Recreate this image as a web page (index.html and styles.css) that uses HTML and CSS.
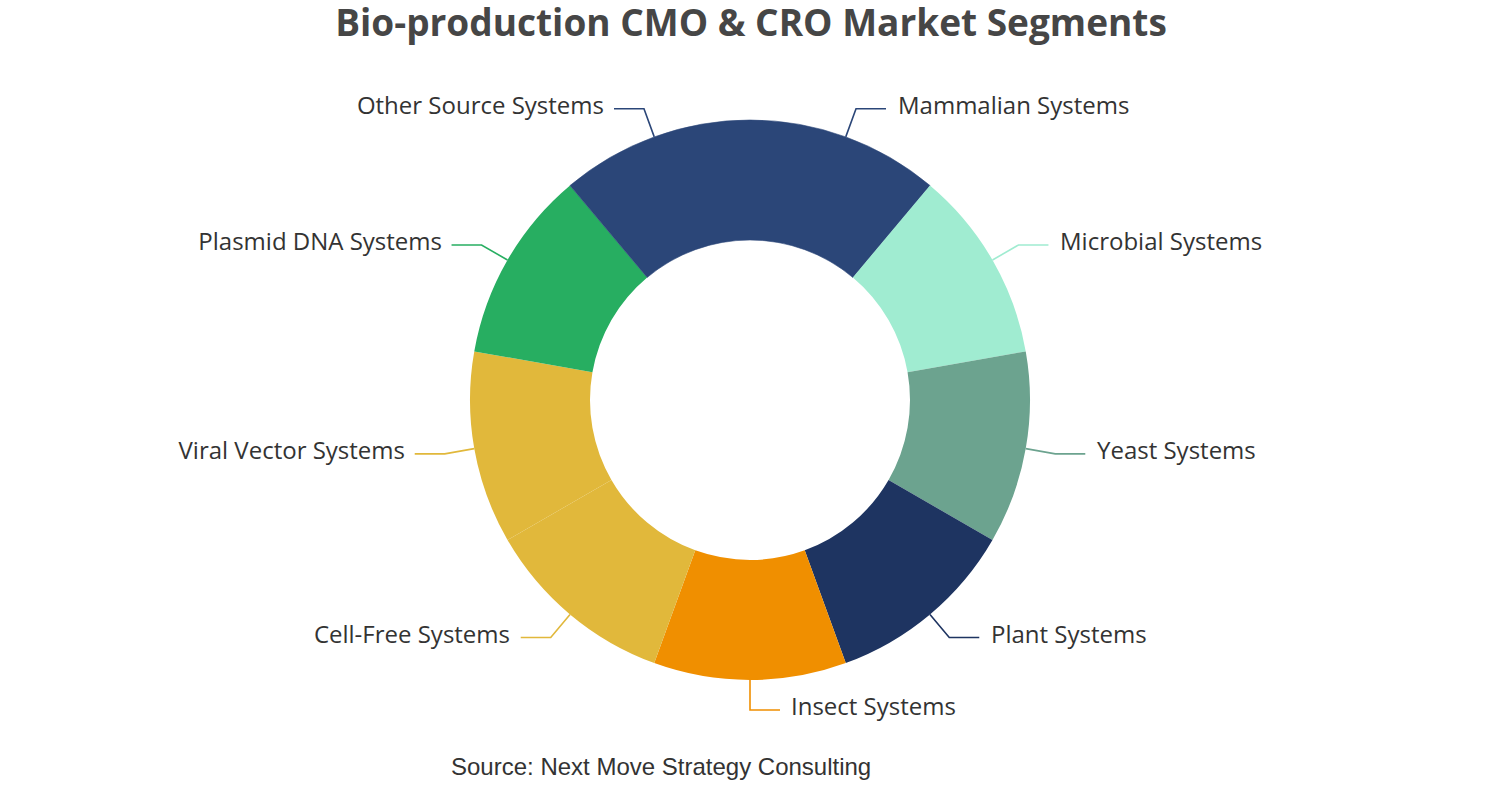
FILE: index.html
```html
<!DOCTYPE html>
<html lang="en">
<head>
<meta charset="utf-8">
<title>Bio-production CMO &amp; CRO Market Segments</title>
<link rel="stylesheet" href="styles.css">
</head>
<body>
<main class="page">
  <h1 class="title">Bio-production CMO &amp; CRO Market Segments</h1>
  <svg class="chart" viewBox="0 60 1502 680" width="1502" height="680" xmlns="http://www.w3.org/2000/svg">
    <g class="slices">
      <path class="s-mammalian" d="M750 120 A280 280 0 0 1 929.98 185.52 L852.85 277.44 A160 160 0 0 0 750 240 Z"/>
      <path class="s-microbial" d="M929.98 185.52 A280 280 0 0 1 1025.75 351.38 L907.57 372.22 A160 160 0 0 0 852.85 277.44 Z"/>
      <path class="s-yeast" d="M1025.75 351.38 A280 280 0 0 1 992.49 540 L888.56 480 A160 160 0 0 0 907.57 372.22 Z"/>
      <path class="s-plant" d="M992.49 540 A280 280 0 0 1 845.76 663.11 L804.72 550.35 A160 160 0 0 0 888.56 480 Z"/>
      <path class="s-insect" d="M845.76 663.11 A280 280 0 0 1 654.24 663.11 L695.28 550.35 A160 160 0 0 0 804.72 550.35 Z"/>
      <path class="s-cellfree" d="M654.24 663.11 A280 280 0 0 1 507.51 540 L611.44 480 A160 160 0 0 0 695.28 550.35 Z"/>
      <path class="s-viral" d="M507.51 540 A280 280 0 0 1 474.25 351.38 L592.43 372.22 A160 160 0 0 0 611.44 480 Z"/>
      <path class="s-plasmid" d="M474.25 351.38 A280 280 0 0 1 570.02 185.52 L647.15 277.44 A160 160 0 0 0 592.43 372.22 Z"/>
      <path class="s-other" d="M570.02 185.52 A280 280 0 0 1 750 120 L750 240 A160 160 0 0 0 647.15 277.44 Z"/>
    </g>
    <g class="leaders">
      <polyline class="l-mammalian" points="845.76,136.88 856.02,108.69 886.02,108.69"/>
      <polyline class="l-microbial" points="992.49,260 1018.46,245 1048.46,245"/>
      <polyline class="l-yeast" points="1025.75,448.62 1055.29,453.83 1085.29,453.83"/>
      <polyline class="l-plant" points="929.98,614.48 949.27,637.46 979.27,637.46"/>
      <polyline class="l-insect" points="750,680 750,710 780,710"/>
      <polyline class="l-cellfree" points="570.02,614.48 550.73,637.46 520.73,637.46"/>
      <polyline class="l-viral" points="474.25,448.62 444.71,453.83 414.71,453.83"/>
      <polyline class="l-plasmid" points="507.51,260 481.54,245 451.54,245"/>
      <polyline class="l-other" points="654.24,136.88 643.98,108.69 613.98,108.69"/>
    </g>
    <g class="labels">
      <text class="lbl" x="898" y="113.7">Mammalian Systems</text>
      <text class="lbl" x="1060" y="250">Microbial Systems</text>
      <text class="lbl" x="1097" y="458.8">Yeast Systems</text>
      <text class="lbl" x="991" y="642.5">Plant Systems</text>
      <text class="lbl" x="791" y="715">Insect Systems</text>
      <text class="lbl end" x="510" y="642.5">Cell-Free Systems</text>
      <text class="lbl end" x="405" y="458.8">Viral Vector Systems</text>
      <text class="lbl end" x="442" y="250">Plasmid DNA Systems</text>
      <text class="lbl end" x="604" y="113.7">Other Source Systems</text>
    </g>
  </svg>
  <p class="source">Source: Next Move Strategy Consulting</p>
</main>
</body>
</html>
```

FILE: styles.css
```css
html, body {
  margin: 0;
  padding: 0;
  background: #ffffff;
}

.page {
  width: 1502px;
  height: 800px;
  display: flex;
  flex-direction: column;
  overflow: hidden;
}

.title {
  margin: 0;
  height: 60px;
  line-height: 44px;
  text-align: center;
  font-family: "Open Sans", "Noto Sans", sans-serif;
  font-weight: 700;
  font-size: 37px;
  color: #464646;
}

.chart {
  display: block;
  flex: none;
}

.lbl {
  font-family: "Open Sans", "Noto Sans", sans-serif;
  font-size: 24px;
  fill: #333333;
}

.lbl.end {
  text-anchor: end;
}

.leaders polyline {
  fill: none;
  stroke-width: 1.6;
}

.s-mammalian, .s-other { fill: #2b4678; stroke: #2b4678; stroke-width: 0.6; }
.s-microbial { fill: #a0ecd1; }
.s-yeast { fill: #6ca38f; }
.s-plant { fill: #1e3461; }
.s-insect { fill: #f08f00; }
.s-cellfree, .s-viral { fill: #e1b83b; }
.s-plasmid { fill: #27ae61; }

.l-mammalian, .l-other { stroke: #2b4678; }
.l-microbial { stroke: #a0ecd1; }
.l-yeast { stroke: #6ca38f; }
.l-plant { stroke: #1e3461; }
.l-insect { stroke: #f08f00; }
.l-cellfree, .l-viral { stroke: #e1b83b; }
.l-plasmid { stroke: #27ae61; }

.source {
  margin: 13px 0 0 451px;
  font-family: "Liberation Sans", Arial, sans-serif;
  font-size: 24px;
  line-height: 28px;
  color: #333333;
}
```
